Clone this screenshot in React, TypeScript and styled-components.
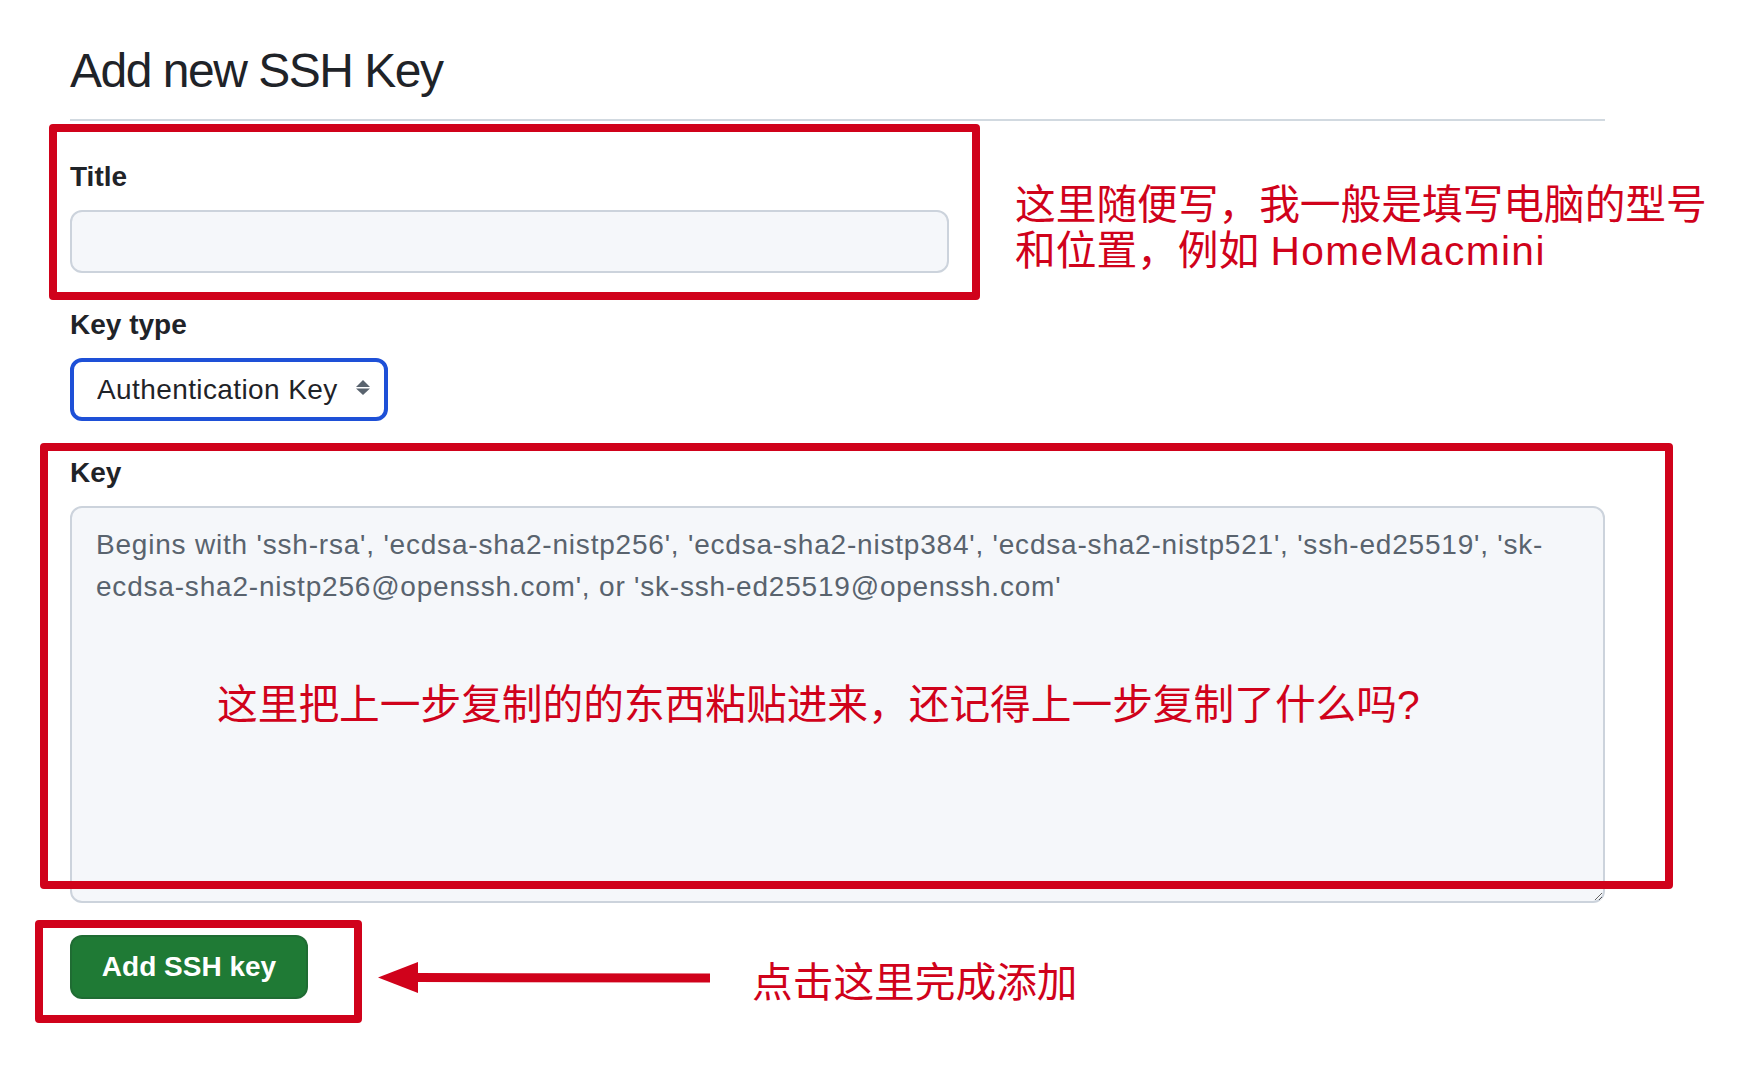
import React from "react";
import styled, { createGlobalStyle } from "styled-components";

const GlobalStyle = createGlobalStyle`
  html, body { margin: 0; padding: 0; background: #ffffff; }
  body {
    font-family: "Liberation Sans", Arial, sans-serif;
    color: #1f2328;
  }
  * { box-sizing: border-box; }
`;

const Canvas = styled.div`
  position: relative;
  width: 1744px;
  height: 1088px;
  overflow: hidden;
  background: #ffffff;
`;

const Page = styled.main`
  width: 1535px;
  margin-left: 70px;
  padding-top: 41px;
  display: flex;
  flex-direction: column;
`;

const Subhead = styled.header`
  padding-bottom: 18px;
  border-bottom: 2px solid #d1d9e0;
`;

const Heading = styled.h1`
  margin: 0;
  font-size: 48px;
  line-height: 60px;
  font-weight: 400;
  letter-spacing: -1.5px;
  color: #1f2328;
`;

const Form = styled.form`
  display: flex;
  flex-direction: column;
  gap: 32px;
  padding-top: 36px;
`;

const Field = styled.div`
  display: flex;
  flex-direction: column;
  align-items: flex-start;
  gap: 13px;
`;

const Label = styled.label`
  font-size: 28px;
  line-height: 40px;
  font-weight: 700;
  color: #1f2328;
`;

const TextInput = styled.input`
  width: 879px;
  height: 63px;
  border: 2px solid #ccd3dc;
  border-radius: 12px;
  background: #f5f7fa;
  padding: 0 24px;
  font-family: "Liberation Sans", Arial, sans-serif;
  font-size: 28px;
  color: #1f2328;
  outline: none;
`;

const SelectWrap = styled.div`
  position: relative;
  width: 318px;
`;

const Select = styled.select`
  appearance: none;
  -webkit-appearance: none;
  width: 100%;
  height: 63px;
  border: 4px solid #1e50d7;
  border-radius: 12px;
  background: #ffffff;
  padding: 0 36px 0 23px;
  font-family: "Liberation Sans", Arial, sans-serif;
  font-size: 28px;
  letter-spacing: 0.4px;
  color: #1f2328;
  outline: none;
`;

const SelectIcon = styled.svg`
  position: absolute;
  right: 17px;
  top: 21px;
  width: 16px;
  height: 16px;
  pointer-events: none;
`;

const KeyArea = styled.textarea`
  width: 1535px;
  height: 397px;
  border: 2px solid #ccd3dc;
  border-radius: 12px;
  background: #f5f7fa;
  padding: 16px 24px;
  font-family: "Liberation Sans", Arial, sans-serif;
  font-size: 28px;
  line-height: 42px;
  letter-spacing: 0.8px;
  color: #1f2328;
  resize: vertical;
  outline: none;

  &::placeholder {
    color: #59636e;
    opacity: 1;
  }
`;

const PrimaryButton = styled.button`
  width: 238px;
  height: 64px;
  border: 2px solid rgba(31, 35, 40, 0.15);
  border-radius: 12px;
  background: #1f7a35;
  color: #ffffff;
  font-family: "Liberation Sans", Arial, sans-serif;
  font-size: 28px;
  font-weight: 700;
  cursor: pointer;
`;

const RedFrame = styled.div<{ $x: number; $y: number; $w: number; $h: number }>`
  position: absolute;
  left: ${(p) => p.$x}px;
  top: ${(p) => p.$y}px;
  width: ${(p) => p.$w}px;
  height: ${(p) => p.$h}px;
  border: 8px solid #d0021b;
  border-radius: 4px;
  pointer-events: none;
`;

const Note = styled.p<{ $x: number; $y: number }>`
  position: absolute;
  left: ${(p) => p.$x}px;
  top: ${(p) => p.$y}px;
  margin: 0;
  font-family: "Liberation Sans", "Noto Sans CJK SC", sans-serif;
  font-size: 40.7px;
  line-height: 46px;
  color: #d0021b;
  white-space: nowrap;
  pointer-events: none;
`;

const Latin = styled.span`
  letter-spacing: 1.4px;
`;

const Arrow = styled.svg`
  position: absolute;
  left: 376px;
  top: 958px;
  width: 336px;
  height: 40px;
  pointer-events: none;
`;

const placeholder =
  "Begins with 'ssh-rsa', 'ecdsa-sha2-nistp256', 'ecdsa-sha2-nistp384', 'ecdsa-sha2-nistp521', 'ssh-ed25519', 'sk-\necdsa-sha2-nistp256@openssh.com', or 'sk-ssh-ed25519@openssh.com'";

export default function App() {
  return (
    <Canvas>
      <GlobalStyle />
      <Page>
        <Subhead>
          <Heading>Add new SSH Key</Heading>
        </Subhead>
        <Form onSubmit={(e) => e.preventDefault()}>
          <Field>
            <Label htmlFor="ssh-title">Title</Label>
            <TextInput id="ssh-title" type="text" />
          </Field>
          <Field>
            <Label htmlFor="ssh-type">Key type</Label>
            <SelectWrap>
              <Select id="ssh-type" defaultValue="auth">
                <option value="auth">Authentication Key</option>
                <option value="sign">Signing Key</option>
              </Select>
              <SelectIcon viewBox="0 0 16 16" aria-hidden="true">
                <polygon points="1,8 8,1 15,8" fill="#59636e" />
                <polygon points="1,9.5 15,9.5 8,16" fill="#59636e" />
              </SelectIcon>
            </SelectWrap>
          </Field>
          <Field>
            <Label htmlFor="ssh-key">Key</Label>
            <KeyArea id="ssh-key" placeholder={placeholder} />
          </Field>
          <Field>
            <PrimaryButton type="submit">Add SSH key</PrimaryButton>
          </Field>
        </Form>
      </Page>

      <RedFrame $x={49} $y={124} $w={931} $h={176} />
      <Note $x={1015} $y={182}>
        这里随便写，我一般是填写电脑的型号
        <br />
        和位置，例如 <Latin>HomeMacmini</Latin>
      </Note>

      <RedFrame $x={40} $y={443} $w={1633} $h={446} />
      <Note $x={217} $y={682}>
        这里把上一步复制的的东西粘贴进来，还记得上一步复制了什么吗?
      </Note>

      <RedFrame $x={35} $y={920} $w={327} $h={103} />
      <Arrow viewBox="0 0 336 40" aria-hidden="true">
        <polygon points="2,19.5 42,4 42,35" fill="#d0021b" />
        <polygon points="40,15 334,15.5 334,24.5 40,24" fill="#d0021b" />
      </Arrow>
      <Note $x={752} $y={960}>点击这里完成添加</Note>
    </Canvas>
  );
}
